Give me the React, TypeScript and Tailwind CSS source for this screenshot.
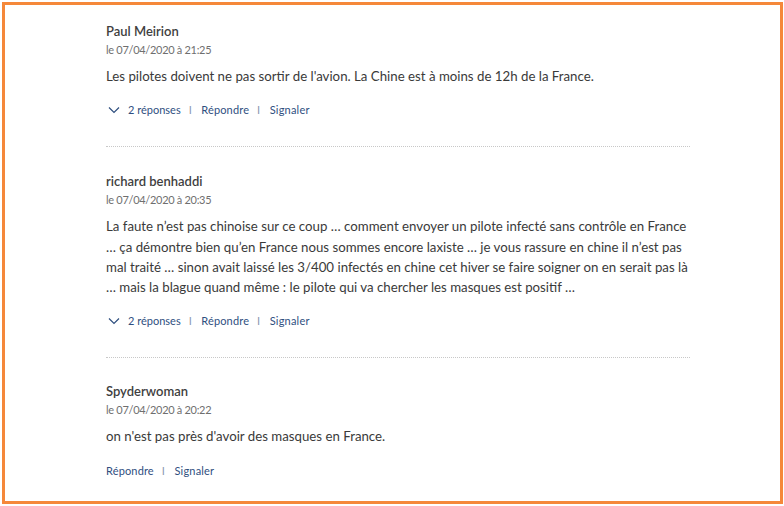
import React from "react";

type Comment = {
  author: string;
  date: string;
  body: string;
  replies?: number;
};

const comments: Comment[] = [
  {
    author: "Paul Meirion",
    date: "le 07/04/2020 à 21:25",
    body: "Les pilotes doivent ne pas sortir de l'avion. La Chine est à moins de 12h de la France.",
    replies: 2,
  },
  {
    author: "richard benhaddi",
    date: "le 07/04/2020 à 20:35",
    body: "La faute n’est pas chinoise sur ce coup … comment envoyer un pilote infecté sans contrôle en France … ça démontre bien qu’en France nous sommes encore laxiste … je vous rassure en chine il n’est pas mal traité … sinon avait laissé les 3/400 infectés en chine cet hiver se faire soigner on en serait pas là … mais la blague quand même : le pilote qui va chercher les masques est positif …",
    replies: 2,
  },
  {
    author: "Spyderwoman",
    date: "le 07/04/2020 à 20:22",
    body: "on n'est pas près d'avoir des masques en France.",
  },
];

const Sep = () => <span className="ml-[8px] mr-[9.5px] text-[#8a9ab3] text-[11px]">I</span>;

const CommentItem = ({ c, last }: { c: Comment; last: boolean }) => (
  <div
    className={
      last
        ? "pt-[17px]"
        : "pt-[17px] pb-[27px] border-b border-dotted border-[#c8c8c8]"
    }
  >
    <div className="text-[13px] leading-[18px] font-semibold text-[#3f3f3f]">{c.author}</div>
    <div className="text-[11px] leading-[19px] tracking-[-0.3px] text-[#6f6f6f]">{c.date}</div>
    <p className="mt-[7px] text-[13.25px] leading-[20.3px] text-[#3a3a3a]">{c.body}</p>
    <div className="mt-[15px] flex items-center text-[11px] leading-[18px] text-[#2f4f7f]">
      {c.replies ? (
        <>
          <svg width="12" height="12" viewBox="0 0 12 12" className="ml-[2px] mr-[8px]">
            <path d="M1 3.5 L6 8.5 L11 3.5" fill="none" stroke="#2f4f7f" strokeWidth="1.2" />
          </svg>
          <span>{c.replies} réponses</span>
          <Sep />
        </>
      ) : null}
      <span className="tracking-[0.15px]">Répondre</span>
      <Sep />
      <span className="tracking-[0.2px]">Signaler</span>
    </div>
  </div>
);

export default function App() {
  return (
    <div className="w-[784px] h-[506px] bg-white pt-[2px] pl-[2px]" style={{ fontFamily: "Lato, 'Liberation Sans', sans-serif" }}>
      <div className="w-[781px] h-[502px] border-[3px] border-[#f5883a] overflow-hidden">
        <div className="ml-[101px] w-[584px]">
          {comments.map((c, i) => (
            <div key={i} className={i === 0 ? "" : i === 1 ? "pt-[8px]" : "pt-[7px]"}>
              <CommentItem c={c} last={i === comments.length - 1} />
            </div>
          ))}
        </div>
      </div>
    </div>
  );
}
